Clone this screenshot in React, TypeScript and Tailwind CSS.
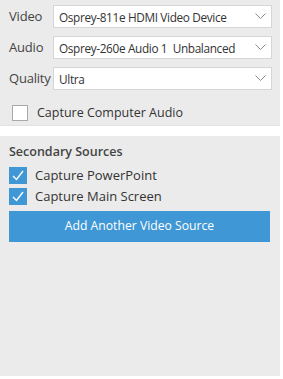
import { useState } from 'react';

const font = { fontFamily: '"Open Sans", "Noto Sans", sans-serif' };

function Chevron() {
  return (
    <svg width="11" height="7" viewBox="0 0 11 7" className="shrink-0">
      <path d="M0.5 0.5 L5.5 5.5 L10.5 0.5" fill="none" stroke="#8a8a8a" strokeWidth="1" />
    </svg>
  );
}

function SelectRow({ label, value }: { label: string; value: string }) {
  return (
    <div className="flex items-center h-[23px]">
      <span className="w-[44px] text-[13px] text-[#444] tracking-[-0.2px]">{label}</span>
      <div className="flex items-center w-[219px] h-[23px] bg-white border border-[#d6d6d6] pl-[5px] pr-[5px]">
        <span className="flex-1 overflow-hidden whitespace-pre text-[11.8px] text-[#333] tracking-[-0.35px] leading-[18px]">{value}</span>
        <Chevron />
      </div>
    </div>
  );
}

function CheckRow({ label, initial }: { label: string; initial: boolean }) {
  const [checked, setChecked] = useState(initial);
  return (
    <label className="flex items-center gap-[8px] h-[17px] cursor-pointer" onClick={() => setChecked(!checked)}>
      <span className="w-[18px] h-[17px] bg-[#3f97d6] flex items-center justify-center">
        {checked && (
          <svg width="12" height="11" viewBox="0 0 12 11">
            <path d="M1 6 L4.5 9.5 L11 1" fill="none" stroke="white" strokeWidth="1.4" />
          </svg>
        )}
      </span>
      <span className="text-[13px] text-[#333]">{label}</span>
    </label>
  );
}

export default function App() {
  const [computerAudio, setComputerAudio] = useState(false);

  return (
    <div className="bg-white w-[283px] h-[379px]" style={font}>
      <div className="w-[280px] h-[376px] bg-[#ebebeb] flex flex-col">
        {/* Primary source */}
        <div className="h-[126px] pt-[5px] pl-[9px] flex flex-col gap-[8px] border-b border-[#e2e2e2]">
          <SelectRow label="Video" value="Osprey-811e HDMI Video Device" />
          <SelectRow label="Audio" value="Osprey-260e Audio 1  Unbalanced" />
          <SelectRow label="Quality" value="Ultra" />
          <label className="flex items-center gap-[9px] mt-[6px] pl-[3px] cursor-pointer" onClick={() => setComputerAudio(!computerAudio)}>
            <span className="w-[16px] h-[16px] bg-white border border-[#a8a8a8]" />
            <span className="text-[12.5px] text-[#333]">Capture Computer Audio</span>
          </label>
        </div>

        <div className="h-[10px] bg-white" />

        {/* Secondary sources */}
        <div className="flex-1 pt-[7px] px-[9px] flex flex-col">
          <div className="text-[12.5px] font-semibold text-[#444]">Secondary Sources</div>
          <div className="mt-[5px] flex flex-col gap-[4px]">
            <CheckRow label="Capture PowerPoint" initial={true} />
            <CheckRow label="Capture Main Screen" initial={true} />
          </div>
          <button className="mt-[6px] w-[261px] h-[31px] bg-[#3f97d6] text-white text-[12.2px] flex items-center justify-center">
            Add Another Video Source
          </button>
        </div>
      </div>
    </div>
  );
}
